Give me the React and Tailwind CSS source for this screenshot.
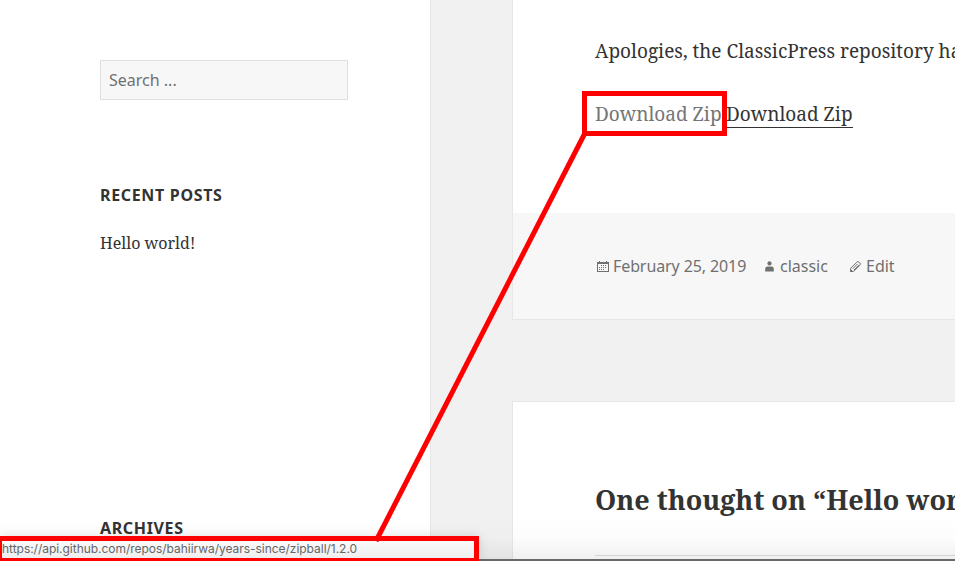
const serif = "font-['Noto_Serif','DejaVu_Serif_Condensed','DejaVu_Serif',serif]";

function CalendarIcon() {
  return (
    <svg width="12" height="11" viewBox="0 0 12 11" fill="#707070">
      <path fillRule="evenodd" d="M0 1h2V0h1v1h6V0h1v1h2v10H0V1Zm1 2v7h10V3H1Z" />
      <path d="M4 4h1v1H4zM6 4h1v1H6zM8 4h1v1H8zM2 6h1v1H2zM4 6h1v1H4zM6 6h1v1H6zM8 6h1v1H8zM2 8h1v1H2zM4 8h1v1H4zM6 8h1v1H6z" />
    </svg>
  );
}

function UserIcon() {
  return (
    <svg width="9" height="11" viewBox="0 0 9 11" fill="#707070">
      <circle cx="4.5" cy="2.4" r="2.1" />
      <path d="M.2 10.500V8c0-1.500.8-2.400 2.300-2.400h4C8 5.600 8.800 6.500 8.800 8v2.500Z" />
    </svg>
  );
}

function PencilIcon() {
  return (
    <svg width="11" height="11" viewBox="0 0 11 11" fill="none" stroke="#707070" strokeWidth="1">
      <path d="M.6 10.400V7.300L6.700 1.200a1.700 1.700 0 0 1 2.500 0l.6.600a1.700 1.700 0 0 1 0 2.500L3.700 10.400Z" />
      <path d="M2.700 7.800 7.600 2.900M4 9 8.800 4.200" />
      <path d="M.6 8.600v1.800h1.800Z" fill="#707070" />
    </svg>
  );
}

function Sidebar() {
  return (
    <aside className="h-full w-[431px] shrink-0 border-r border-[#e7e7e7] bg-white pl-[100px] pt-[60px] text-[#333]">
      <div className="flex h-10 w-[248px] items-center border border-[#e0e0e0] bg-[#f7f7f7] px-2 text-[16px] text-[#707070]">
        <span className="whitespace-nowrap">Search ...</span>
      </div>
      <h2 className="mt-[83px] h-6 whitespace-nowrap text-[16px] font-bold leading-6 tracking-[0.67px]">
        RECENT POSTS
      </h2>
      <p className={`mt-6 h-6 whitespace-nowrap text-[16px] leading-6 ${serif}`}>Hello world!</p>
      <h2 className="mt-[261px] h-6 whitespace-nowrap text-[16px] font-bold leading-6 tracking-[0.64px]">
        ARCHIVES
      </h2>
    </aside>
  );
}

function Article() {
  return (
    <article className="h-[320px] border-b border-l border-[#e7e7e7] bg-white">
      <div className={`h-[213px] whitespace-nowrap pl-[82px] pt-[35px] text-[19px] leading-8 text-[#333] ${serif}`}>
        <p>Apologies, the ClassicPress repository has</p>
        <p className="mt-[31px] flex">
          <span className="w-[131px] text-[#757575]">Download Zip</span>
          <span className="h-[30px] w-[127px] border-b border-[#333]">Download Zip</span>
        </p>
      </div>
      <footer className="flex h-[106px] items-center bg-[#f7f7f7] pl-[84px] text-[16px] text-[#707070]">
        <CalendarIcon />
        <span className="ml-1 w-[152px] whitespace-nowrap tracking-[-0.1px]">February 25, 2019</span>
        <UserIcon />
        <span className="ml-[6px] w-[70px]">classic</span>
        <PencilIcon />
        <span className="ml-[5px]">Edit</span>
      </footer>
    </article>
  );
}

function Comments() {
  return (
    <section className="mt-[81px] h-[160px] border-l border-t border-[#e7e7e7] bg-white pl-[82px] pt-[79px]">
      <h2 className={`h-[74px] whitespace-nowrap text-[27px] font-bold leading-[38px] text-[#333] ${serif}`}>
        One thought on “Hello world!”
      </h2>
      <div className="border-t border-[#dedede]" />
    </section>
  );
}

export default function App() {
  return (
    <div className="relative flex h-[561px] w-[955px] overflow-hidden bg-[#f1f1f1] font-['Noto_Sans',sans-serif]">
      <Sidebar />
      <main className="ml-[81px] h-full min-w-0 flex-1">
        <Article />
        <Comments />
      </main>
      <div className="absolute bottom-0 left-0 h-11 w-full border-b-2 border-[#696969] bg-linear-to-b from-transparent via-black/1 to-black/6" />
      <div className="absolute bottom-0 left-0 flex h-[25px] w-[479px] items-center border-b-3 border-l-2 border-r-5 border-t-5 border-[#f00] bg-linear-to-b from-[#fafafa] to-[#eeeeee] pb-0.5 shadow-[0_0_12px_rgba(0,0,0,0.12)]">
        <span className="whitespace-nowrap font-['Inter',sans-serif] text-[12px] leading-4 tracking-[-0.03px] text-[#656565]">
          https://api.github.com/repos/bahiirwa/years-since/zipball/1.2.0
        </span>
      </div>
      <div className="absolute left-[582px] top-[91px] h-[45px] w-[145px] border-5 border-[#f00]" />
      <svg className="absolute left-0 top-0" width="955" height="561" fill="none">
        <path d="M585 133 376 541" stroke="#f00" strokeWidth="5" />
      </svg>
    </div>
  );
}
